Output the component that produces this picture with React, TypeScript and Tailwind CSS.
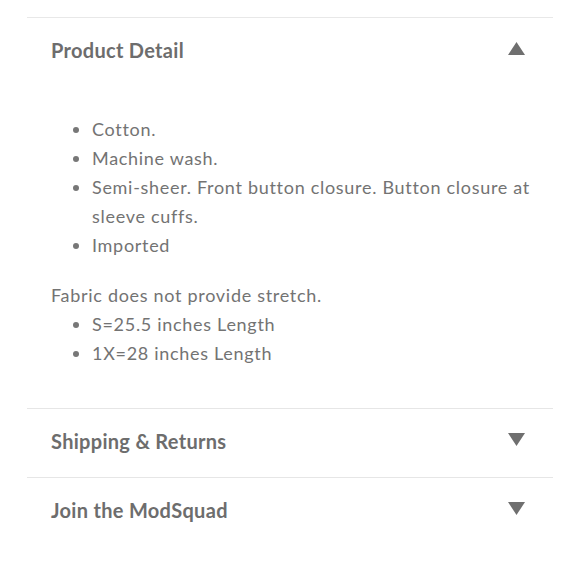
const Triangle = ({ up }: { up?: boolean }) => (
  <svg width="17" height="13" viewBox="0 0 17 13" className="shrink-0">
    {up ? <polygon points="8.5,0 17,13 0,13" fill="#6f6f6f" /> : <polygon points="0,0 17,0 8.5,13" fill="#6f6f6f" />}
  </svg>
);

function Section({ title, open, first, children }: { title: string; open?: boolean; first?: boolean; children?: React.ReactNode }) {
  return (
    <div className={first ? 'border-t border-[#e8e8e8]' : 'border-t border-[#e6e6e6]'}>
      <div className="flex items-start justify-between pl-6 pr-[28px] pt-[20px] pb-[24px]">
        <h2 className="text-[20px] font-bold leading-[24px] text-[#6d6d6d] tracking-[0.3px]">{title}</h2>
        <div className="pt-[4px]">
          <Triangle up={open} />
        </div>
      </div>
      {children}
    </div>
  );
}

export default function App() {
  const bullets = ['Cotton.', 'Machine wash.', 'Semi-sheer. Front button closure. Button closure at sleeve cuffs.', 'Imported'];
  const sizes = ['S=25.5 inches Length', '1X=28 inches Length'];

  return (
    <div className="w-[580px] h-[580px] bg-white font-['Lato',sans-serif] pt-[17px]">
      <div className="mx-[27px]">
        <Section title="Product Detail" open first>
          {/* expanded body */}
          <div className="pl-6 pr-4 pt-[29px] pb-[40px] text-[18px] leading-[29px] tracking-[0.7px] text-[#737373]">
            <ul className="list-disc pl-[41px] marker:text-[#777777]">
              {bullets.map((b) => (
                <li key={b}>{b}</li>
              ))}
            </ul>
            <p className="mt-[21px]">Fabric does not provide stretch.</p>
            <ul className="list-disc pl-[41px] marker:text-[#777777]">
              {sizes.map((s) => (
                <li key={s}>{s}</li>
              ))}
            </ul>
          </div>
        </Section>
        <Section title="Shipping & Returns" />
        <Section title="Join the ModSquad" />
      </div>
    </div>
  );
}
